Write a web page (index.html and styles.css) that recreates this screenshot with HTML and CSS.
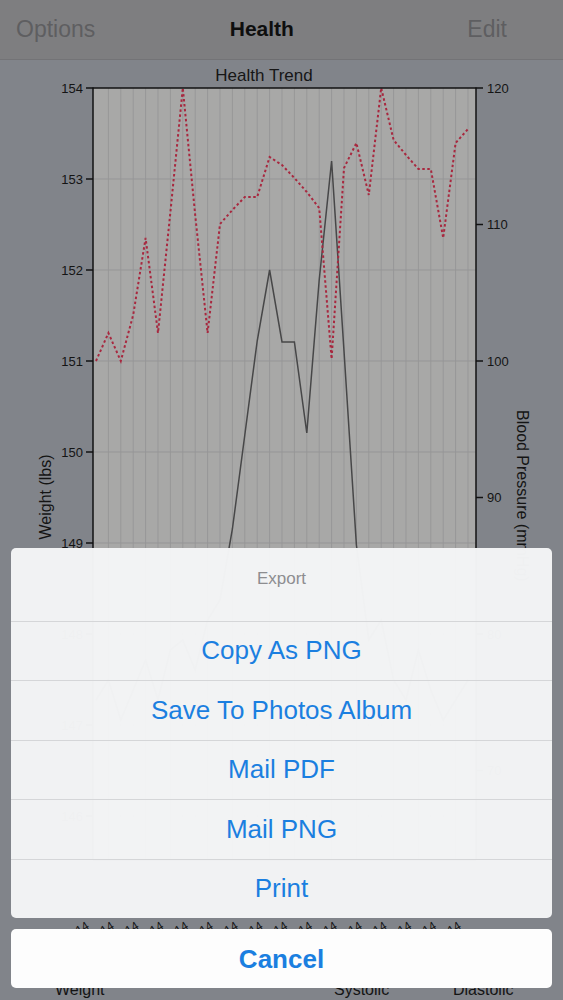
FILE: index.html
```html
<!DOCTYPE html>
<html>
<head>
<meta charset="utf-8">
<title>Health</title>
<link rel="stylesheet" href="styles.css">
</head>
<body>
<header class="nav">
  <span class="nav-btn">Options</span>
  <span class="nav-title">Health</span>
  <span class="nav-btn">Edit</span>
</header>
<main class="content">
<svg class="chart" width="563" height="940" viewBox="0 60 563 940" xmlns="http://www.w3.org/2000/svg">
  <defs>
    <clipPath id="plotclip"><rect x="93" y="88" width="383" height="772"/></clipPath>
  </defs>
  <text class="chart-title" x="264" y="81" text-anchor="middle">Health Trend</text>
  <rect class="plot-bg" x="93" y="88" width="383" height="772"/>
  <g class="vgrid">
    <line x1="108.4" y1="88" x2="108.4" y2="860"/><line x1="120.8" y1="88" x2="120.8" y2="860"/>
    <line x1="133.2" y1="88" x2="133.2" y2="860"/><line x1="145.6" y1="88" x2="145.6" y2="860"/>
    <line x1="158" y1="88" x2="158" y2="860"/><line x1="170.4" y1="88" x2="170.4" y2="860"/>
    <line x1="182.8" y1="88" x2="182.8" y2="860"/><line x1="195.2" y1="88" x2="195.2" y2="860"/>
    <line x1="207.6" y1="88" x2="207.6" y2="860"/><line x1="220" y1="88" x2="220" y2="860"/>
    <line x1="232.4" y1="88" x2="232.4" y2="860"/><line x1="244.8" y1="88" x2="244.8" y2="860"/>
    <line x1="257.2" y1="88" x2="257.2" y2="860"/><line x1="269.6" y1="88" x2="269.6" y2="860"/>
    <line x1="282" y1="88" x2="282" y2="860"/><line x1="294.4" y1="88" x2="294.4" y2="860"/>
    <line x1="306.8" y1="88" x2="306.8" y2="860"/><line x1="319.2" y1="88" x2="319.2" y2="860"/>
    <line x1="331.6" y1="88" x2="331.6" y2="860"/><line x1="344" y1="88" x2="344" y2="860"/>
    <line x1="356.4" y1="88" x2="356.4" y2="860"/><line x1="368.8" y1="88" x2="368.8" y2="860"/>
    <line x1="381.2" y1="88" x2="381.2" y2="860"/><line x1="393.6" y1="88" x2="393.6" y2="860"/>
    <line x1="406" y1="88" x2="406" y2="860"/><line x1="418.4" y1="88" x2="418.4" y2="860"/>
    <line x1="430.8" y1="88" x2="430.8" y2="860"/><line x1="443.2" y1="88" x2="443.2" y2="860"/>
    <line x1="455.6" y1="88" x2="455.6" y2="860"/><line x1="468" y1="88" x2="468" y2="860"/>
  </g>
  <g class="hgrid">
    <line x1="93" y1="179" x2="476" y2="179"/><line x1="93" y1="270" x2="476" y2="270"/>
    <line x1="93" y1="361" x2="476" y2="361"/><line x1="93" y1="452" x2="476" y2="452"/>
    <line x1="93" y1="543" x2="476" y2="543"/><line x1="93" y1="634" x2="476" y2="634"/>
    <line x1="93" y1="725" x2="476" y2="725"/><line x1="93" y1="816" x2="476" y2="816"/>
  </g>
  <g clip-path="url(#plotclip)">
    <polyline class="weight-line" points="96,700 108.4,680 120.8,720 133.2,690 145.6,660 158,700 170.4,650 182.8,640 195.2,670 207.6,620 220,600 232.4,529 244.8,435 257.2,341 269.6,270 282,342 294.4,342 306.8,433 319.2,280 331.6,161 344,351 356.4,545 368.8,640 381.2,620 393.6,680 406,700 418.4,650 430.8,690 443.2,720 455.6,700 468,680"/>
    <polyline class="sys-line" points="96,361 108.4,333 120.8,361 133.2,315 145.6,238 158,333 170.4,212 182.8,88 195.2,215 207.6,333 220,224 232.4,210 244.8,197 257.2,197 269.6,157 282,165 294.4,178 306.8,192 319.2,208 331.6,359 344,168 356.4,143 368.8,195 381.2,88 393.6,140 406,155 418.4,169 430.8,169 443.2,238 455.6,143 468,129"/>
  </g>
  <g class="axis">
    <line x1="93" y1="88" x2="476" y2="88"/>
    <line x1="93" y1="87.5" x2="93" y2="860"/>
    <line x1="476" y1="87.5" x2="476" y2="860"/>
    <line x1="93" y1="860" x2="476" y2="860"/>
    <line x1="86" y1="88" x2="93" y2="88"/><line x1="86" y1="179" x2="93" y2="179"/>
    <line x1="86" y1="270" x2="93" y2="270"/><line x1="86" y1="361" x2="93" y2="361"/>
    <line x1="86" y1="452" x2="93" y2="452"/><line x1="86" y1="543" x2="93" y2="543"/>
    <line x1="86" y1="634" x2="93" y2="634"/><line x1="86" y1="725" x2="93" y2="725"/>
    <line x1="86" y1="816" x2="93" y2="816"/>
    <line x1="476" y1="88" x2="483" y2="88"/><line x1="476" y1="224.5" x2="483" y2="224.5"/>
    <line x1="476" y1="361" x2="483" y2="361"/><line x1="476" y1="497.5" x2="483" y2="497.5"/>
    <line x1="476" y1="634" x2="483" y2="634"/><line x1="476" y1="770.5" x2="483" y2="770.5"/>
  </g>
  <g class="tick-label" text-anchor="end">
    <text x="83" y="92.5">154</text><text x="83" y="183.5">153</text>
    <text x="83" y="274.5">152</text><text x="83" y="365.5">151</text>
    <text x="83" y="456.5">150</text><text x="83" y="547.5">149</text>
    <text x="83" y="638.5">148</text><text x="83" y="729.5">147</text>
    <text x="83" y="820.5">146</text>
  </g>
  <g class="tick-label">
    <text x="487" y="92.5">120</text><text x="487" y="229">110</text>
    <text x="487" y="365.5">100</text><text x="487" y="502">90</text>
    <text x="487" y="638.5">80</text><text x="487" y="775">70</text>
  </g>
  <text class="axis-title" x="51" y="497" text-anchor="middle" transform="rotate(-90 51 497)">Weight (lbs)</text>
  <text class="axis-title" x="517" y="410" transform="rotate(90 517 410)">Blood Pressure (mmHg)</text>
  <g class="date-label" text-anchor="end">
    <text x="90" y="928" transform="rotate(-32 90 928)">1/2/2014</text>
    <text x="114.8" y="928" transform="rotate(-32 114.8 928)">1/4/2014</text>
    <text x="139.6" y="928" transform="rotate(-32 139.6 928)">1/6/2014</text>
    <text x="164.4" y="928" transform="rotate(-32 164.4 928)">1/8/2014</text>
    <text x="189.2" y="928" transform="rotate(-32 189.2 928)">1/10/2014</text>
    <text x="214" y="928" transform="rotate(-32 214 928)">1/12/2014</text>
    <text x="238.8" y="928" transform="rotate(-32 238.8 928)">1/14/2014</text>
    <text x="263.6" y="928" transform="rotate(-32 263.6 928)">1/16/2014</text>
    <text x="288.4" y="928" transform="rotate(-32 288.4 928)">1/18/2014</text>
    <text x="313.2" y="928" transform="rotate(-32 313.2 928)">1/20/2014</text>
    <text x="338" y="928" transform="rotate(-32 338 928)">1/22/2014</text>
    <text x="362.8" y="928" transform="rotate(-32 362.8 928)">1/24/2014</text>
    <text x="387.6" y="928" transform="rotate(-32 387.6 928)">1/26/2014</text>
    <text x="412.4" y="928" transform="rotate(-32 412.4 928)">1/28/2014</text>
    <text x="437.2" y="928" transform="rotate(-32 437.2 928)">1/30/2014</text>
    <text x="462" y="928" transform="rotate(-32 462 928)">2/1/2014</text>
  </g>
  <g class="legend">
    <text x="55" y="995">Weight</text>
    <text x="334" y="995">Systolic</text>
    <text x="453" y="995">Diastolic</text>
  </g>
</svg>
</main>
<div class="sheet">
  <div class="sheet-group">
    <div class="sheet-title">Export</div>
    <button class="sheet-row">Copy As PNG</button>
    <button class="sheet-row">Save To Photos Album</button>
    <button class="sheet-row">Mail PDF</button>
    <button class="sheet-row">Mail PNG</button>
    <button class="sheet-row">Print</button>
  </div>
  <button class="sheet-cancel">Cancel</button>
</div>
</body>
</html>
```
FILE: styles.css
```css
html, body {
  margin: 0;
  padding: 0;
}
body {
  width: 563px;
  height: 1000px;
  overflow: hidden;
  position: relative;
  background: #81848a;
  font-family: "Liberation Sans", Arial, sans-serif;
}
.nav {
  box-sizing: border-box;
  height: 60px;
  background: #7e7e80;
  border-bottom: 1px solid #737376;
  display: flex;
  align-items: center;
  justify-content: space-between;
  padding: 0 56px 1px 16px;
}
.nav-btn {
  font-size: 23px;
  color: #5e5e61;
}
.nav-title {
  font-size: 21px;
  font-weight: bold;
  color: #0e0e0e;
  margin-right: 39px;
}
.content {
  display: block;
}
.chart {
  display: block;
}
.chart-title {
  font-family: "Liberation Sans", Arial, sans-serif;
  font-size: 17px;
  fill: #161616;
}
.plot-bg {
  fill: #a8a8a7;
}
.vgrid line {
  stroke: #979798;
  stroke-width: 1;
}
.hgrid line {
  stroke: #959596;
  stroke-width: 1;
}
.axis line {
  stroke: #121212;
  stroke-width: 1.5;
}
.weight-line {
  fill: none;
  stroke: #474748;
  stroke-width: 1.5;
}
.sys-line {
  fill: none;
  stroke: #a8283f;
  stroke-width: 2;
  stroke-dasharray: 2.5 2.5;
}
.tick-label text {
  font-family: "Liberation Sans", Arial, sans-serif;
  font-size: 13px;
  fill: #141414;
}
.axis-title {
  font-family: "Liberation Sans", Arial, sans-serif;
  font-size: 16px;
  fill: #141414;
}
.date-label text {
  font-family: "Liberation Sans", Arial, sans-serif;
  font-size: 12px;
  fill: #141414;
}
.legend text {
  font-family: "Liberation Sans", Arial, sans-serif;
  font-size: 16px;
  fill: #141414;
}
.sheet {
  position: absolute;
  left: 11px;
  right: 11px;
  bottom: 12px;
  display: flex;
  flex-direction: column;
  gap: 11px;
}
.sheet-group {
  border-radius: 5px;
  overflow: hidden;
  background: rgba(243, 244, 245, 0.985);
  display: flex;
  flex-direction: column;
}
.sheet-title {
  box-sizing: border-box;
  height: 73px;
  padding-bottom: 10px;
  display: flex;
  align-items: center;
  justify-content: center;
  font-size: 17px;
  color: #8d8d90;
}
.sheet-row,
.sheet-cancel {
  appearance: none;
  margin: 0;
  border: 0;
  background: transparent;
  font-family: "Liberation Sans", Arial, sans-serif;
  font-size: 26px;
  color: #1b7fe0;
  display: flex;
  align-items: center;
  justify-content: center;
  padding: 0;
  width: 100%;
}
.sheet-row {
  box-sizing: border-box;
  height: 59.5px;
  border-top: 1px solid #d5d6d8;
}
.sheet-cancel {
  height: 59px;
  background: #fdfdfd;
  border-radius: 5px;
  font-weight: bold;
  padding-top: 2px;
}
```
